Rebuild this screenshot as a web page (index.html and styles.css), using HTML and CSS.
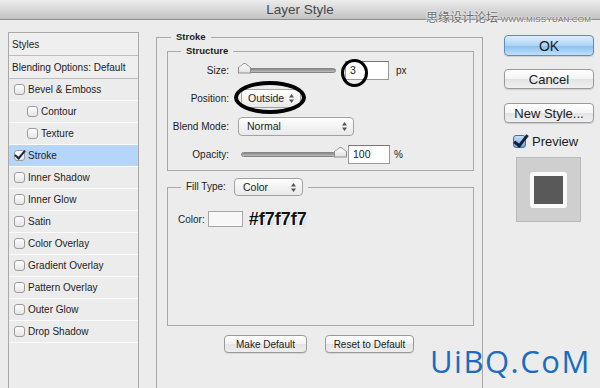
FILE: index.html
```html
<!DOCTYPE html>
<html>
<head>
  <meta charset="utf-8">
  <title>Layer Style</title>
  <link rel="stylesheet" href="styles.css">
</head>
<body>
  <div class="titlebar">Layer Style</div>
  <div class="dialog">
    <ul class="styles">
      <li class="head">Styles</li>
      <li class="head">Blending Options: Default</li>
      <li><span class="cb"></span>Bevel &amp; Emboss</li>
      <li class="sub"><span class="cb"></span>Contour</li>
      <li class="sub"><span class="cb"></span>Texture</li>
      <li class="active"><span class="cb checked"></span>Stroke</li>
      <li><span class="cb"></span>Inner Shadow</li>
      <li><span class="cb"></span>Inner Glow</li>
      <li><span class="cb"></span>Satin</li>
      <li><span class="cb"></span>Color Overlay</li>
      <li><span class="cb"></span>Gradient Overlay</li>
      <li><span class="cb"></span>Pattern Overlay</li>
      <li><span class="cb"></span>Outer Glow</li>
      <li><span class="cb"></span>Drop Shadow</li>
    </ul>

    <fieldset class="group stroke">
      <legend>Stroke</legend>
      <fieldset class="group structure">
        <legend>Structure</legend>
        <div class="row">
          <label>Size:</label>
          <div class="slider size-slider"><span class="thumb"></span></div>
          <div class="field size-field">3</div>
          <span class="unit">px</span>
        </div>
        <div class="row">
          <label>Position:</label>
          <div class="select position-select">Outside<svg class="arrows" viewBox="0 0 5 9"><path d="M2.5 0L5 3.4H0Z M2.5 9L5 5.6H0Z"/></svg></div>
        </div>
        <div class="row">
          <label>Blend Mode:</label>
          <div class="select blend-select">Normal<svg class="arrows" viewBox="0 0 5 9"><path d="M2.5 0L5 3.4H0Z M2.5 9L5 5.6H0Z"/></svg></div>
        </div>
        <div class="row">
          <label>Opacity:</label>
          <div class="slider opacity-slider"><span class="thumb"></span></div>
          <div class="field opacity-field">100</div>
          <span class="unit pct">%</span>
        </div>
      </fieldset>

      <fieldset class="group fill">
        <legend><span class="fill-label">Fill Type:</span><span class="select fill-select">Color<svg class="arrows" viewBox="0 0 5 9"><path d="M2.5 0L5 3.4H0Z M2.5 9L5 5.6H0Z"/></svg></span></legend>
        <div class="color-row">
          <label>Color:</label>
          <span class="swatch"></span>
          <span class="hex">#f7f7f7</span>
        </div>
      </fieldset>

      <div class="defaults">
        <button class="small-btn make">Make Default</button>
        <button class="small-btn reset">Reset to Default</button>
      </div>
    </fieldset>

    <div class="actions">
      <button class="btn ok">OK</button>
      <button class="btn">Cancel</button>
      <button class="btn">New Style...</button>
      <div class="preview-check"><span class="pcb"></span>Preview</div>
      <div class="preview-box"><span class="preview-swatch"></span></div>
    </div>
  </div>

  <!-- annotations drawn over the screenshot -->
  <div class="mark size-mark"></div>
  <div class="mark position-mark"></div>

  <div class="wm-top"><span class="cn">思缘设计论坛</span> <span class="en">WWW.MISSYUAN.COM</span></div>
  <div class="wm-bottom">UiBQ.CoM</div>
</body>
</html>
```

FILE: styles.css
```css
*{margin: 0;padding: 0;box-sizing: border-box;}
ul{list-style: none;}
html, body{
  width: 100%;
  height: 100%;
  overflow: hidden;
}
body{
  position: relative;
  background-color: #ececec;
  color: #1c1c1c;
  font-family: "Liberation Sans", Arial, sans-serif;
  font-size: 10px;
}
.titlebar{
  height: 20px;
  border-bottom: 1px solid #8e8e8e;
  background: linear-gradient(#ececec, #d6d6d6 55%, #c2c2c2);
  text-align: center;
  font-size: 13.5px;
  line-height: 19px;
  color: #474747;
}
.dialog{
  display: flex;
  align-items: flex-start;
  padding: 12px 0 0 8px;
}

/* left list */
.styles{
  width: 131px;
  height: 357px;
  flex-shrink: 0;
  border: 1px solid #a9a9a9;
  border-bottom: none;
  background-color: #ececec;
}
.styles li{
  height: 22px;
  display: flex;
  align-items: center;
  padding-left: 5px;
  border-bottom: 1px solid #fafafa;
  font-size: 10px;
}
.styles li.head{
  height: 23px;
  padding-left: 3px;
  background-color: #efefef;
  border-bottom: 1px solid #bdbdbd;
}
.styles li.sub{
  padding-left: 18px;
}
.styles li.active{
  background-color: #b6d5fb;
}
.cb{
  width: 11px;
  height: 11px;
  margin-right: 3px;
  border: 1px solid #9c9c9c;
  border-radius: 3px;
  background: linear-gradient(#ffffff, #e4e4e4);
  position: relative;
}
.cb.checked::after{
  content: "";
  position: absolute;
  left: 2px;
  top: -3px;
  width: 4px;
  height: 9px;
  border-right: 2px solid #1c2747;
  border-bottom: 2px solid #1c2747;
  transform: rotate(40deg);
}

/* fieldsets */
.group{
  border: 1px solid #a9a9a9;
}
.group legend{
  font-weight: bold;
  font-size: 9.5px;
  line-height: 10px;
  padding: 0 5px;
  margin-left: 13px;
}
.stroke{
  width: 327px;
  height: 357px;
  flex-shrink: 0;
  margin-left: 17px;
  padding: 4px 8px 0 10px;
  border-bottom: none;
}
.stroke > legend{
  margin-left: 4px;
}
.structure{
  padding: 0 0 2px 0;
}
.row{
  display: flex;
  align-items: center;
  height: 28px;
}
.row label{
  width: 61px;
  margin-right: 9px;
  text-align: right;
}
.slider{
  position: relative;
  height: 5px;
  border: 1px solid #858585;
  border-radius: 3px;
  background: linear-gradient(#8a8a8a, #bdbdbd);
}
.size-slider{
  width: 98px;
  margin-right: 9px;
}
.opacity-slider{
  width: 95px;
  margin-left: 3px;
  margin-right: 12px;
}
.thumb{
  position: absolute;
  top: -6px;
  width: 13px;
  height: 11px;
  background: #8f8f8f;
  clip-path: polygon(0 45%, 50% 0, 100% 45%, 100% 100%, 0 100%);
}
.thumb::after{
  content: "";
  position: absolute;
  left: 1px;
  top: 1px;
  right: 1px;
  bottom: 1px;
  background: linear-gradient(#ffffff, #dedede);
  clip-path: polygon(0 45%, 50% 0, 100% 45%, 100% 100%, 0 100%);
}
.size-slider .thumb{
  left: -1px;
}
.opacity-slider .thumb{
  right: -12px;
}
.field{
  width: 44px;
  height: 19px;
  padding-left: 4px;
  line-height: 17px;
  font-size: 10.5px;
  background-color: #fff;
  border: 1px solid #9a9a9a;
  border-top-color: #777;
}
.opacity-field{
  width: 42px;
}
.unit{
  margin-left: 7px;
}
.unit.pct{
  margin-left: 4px;
}
.select{
  display: flex;
  align-items: center;
  justify-content: space-between;
  height: 19px;
  padding: 0 6px 0 8px;
  font-weight: normal;
  font-size: 10.5px;
  border: 1px solid #a2a2a2;
  border-radius: 4px;
  background: linear-gradient(#ffffff, #f3f3f3 50%, #e9e9e9);
}
.position-select{
  width: 60px;
  margin-left: 3px;
  padding-left: 6px;
}
.blend-select{
  width: 116px;
}
.arrows{
  width: 5px;
  height: 9px;
  fill: #555;
}

.fill{
  margin-top: 7px;
  padding: 15px 0 98px 10px;
}
.fill legend{
  display: flex;
  align-items: center;
  margin-left: 3px;
  font-weight: normal;
  font-size: 10px;
  line-height: 18px;
}
.fill-label{
  width: 48px;
}
.fill-select{
  width: 69px;
  height: 18px;
}
.color-row{
  display: flex;
  align-items: center;
  height: 16px;
}
.swatch{
  width: 35px;
  height: 16px;
  margin-left: 3px;
  background-color: #f7f7f7;
  border: 1px solid #a6a6a6;
}
.hex{
  margin-left: 6px;
  font-weight: bold;
  font-size: 18px;
  color: #111;
  text-shadow: 1px 1px 0 #fff, 2px 2px 1px #c9dfef, -1px 0 0 #fff;
}

.defaults{
  display: flex;
  gap: 18px;
  margin-top: 9px;
  padding-left: 57px;
}
.small-btn{
  height: 18px;
  font-family: inherit;
  font-size: 10px;
  color: #1c1c1c;
  border: 1px solid #999;
  border-radius: 4px;
  background: linear-gradient(#ffffff, #f2f2f2 50%, #e4e4e4 51%, #ededed);
  box-shadow: 0 1px 0 #d8d8d8;
}
.make{
  width: 83px;
}
.reset{
  width: 89px;
}

/* right column */
.actions{
  width: 90px;
  flex-shrink: 0;
  margin-left: 21px;
  padding-top: 3px;
  display: flex;
  flex-direction: column;
}
.btn{
  height: 20px;
  margin-bottom: 14px;
  font-family: inherit;
  font-size: 13px;
  color: #1c1c1c;
  border: 1px solid #9a9a9a;
  border-radius: 4px;
  background: linear-gradient(#ffffff, #f4f4f4 50%, #e3e3e3 51%, #f0f0f0);
  box-shadow: 0 1px 1px #cfcfcf;
}
.btn.ok{
  height: 21px;
  margin-bottom: 13px;
  font-size: 14px;
  border-color: #5f8cbf;
  background: linear-gradient(#dceefc, #aed4f5 50%, #86c0f0 51%, #bfe0fa);
}
.preview-check{
  display: flex;
  align-items: center;
  height: 14px;
  margin: -3px 0 0 9px;
  font-size: 13px;
}
.pcb{
  position: relative;
  width: 13px;
  height: 13px;
  margin-right: 6px;
  border: 1px solid #4f6f96;
  border-radius: 3px;
  background: linear-gradient(#c9e0f7, #6fa3dc);
}
.pcb::after{
  content: "";
  position: absolute;
  left: 3px;
  top: -4px;
  width: 5px;
  height: 12px;
  border-right: 3px solid #15203d;
  border-bottom: 3px solid #15203d;
  transform: rotate(38deg);
}
.preview-box{
  display: flex;
  align-items: center;
  justify-content: center;
  width: 65px;
  height: 65px;
  margin: 9px 0 0 12px;
  background-color: #cfcfcf;
  border: 1px solid #b9b9b9;
}
.preview-swatch{
  width: 37px;
  height: 36px;
  border: 4px solid #fafafa;
  border-radius: 3px;
  background-color: #595959;
}

/* hand drawn marks and watermarks */
.mark{
  position: absolute;
  border: 4px solid #000;
  border-radius: 50%;
}
.size-mark{
  left: 341px;
  top: 59px;
  width: 27px;
  height: 28px;
  border-width: 3.5px;
}
.position-mark{
  left: 234px;
  top: 81px;
  width: 72px;
  height: 33px;
}
.wm-top{
  position: absolute;
  left: 426px;
  top: 8px;
  color: #6b6b6b;
  text-shadow: 0 0 2px #fff, 0 0 2px #fff;
  white-space: nowrap;
}
.wm-top .cn{
  font-family: "Noto Sans CJK SC", sans-serif;
  font-size: 12px;
}
.wm-top .en{
  font-size: 8px;
  letter-spacing: 0.2px;
}
.wm-bottom{
  position: absolute;
  left: 430px;
  top: 346px;
  font-family: "Open Sans", sans-serif;
  font-size: 31px;
  line-height: 31px;
  letter-spacing: 1.5px;
  color: #1a6cc2;
}
```
